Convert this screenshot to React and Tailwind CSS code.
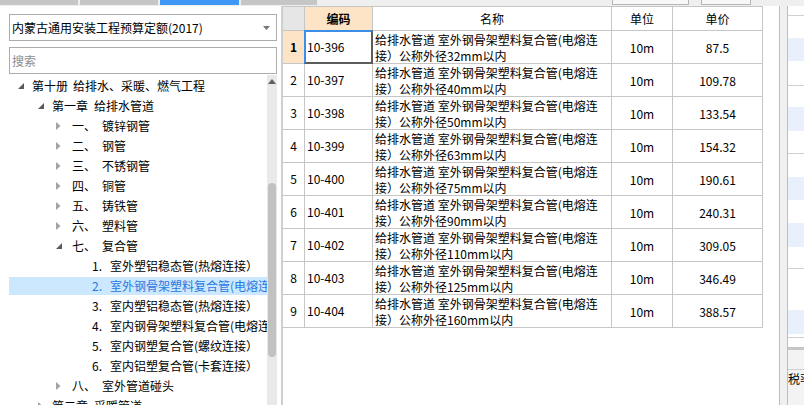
import React from "react";

const rows = [
  ["10-396", "32", "87.5"],
  ["10-397", "40", "109.78"],
  ["10-398", "50", "133.54"],
  ["10-399", "63", "154.32"],
  ["10-400", "75", "190.61"],
  ["10-401", "90", "240.31"],
  ["10-402", "110", "309.05"],
  ["10-403", "125", "346.49"],
  ["10-404", "160", "388.57"],
];

const tree = [
  { lvl: 0, icon: "open", a: "第十册", b: "给排水、采暖、燃气工程" },
  { lvl: 1, icon: "open", a: "第一章", b: "给排水管道" },
  { lvl: 2, icon: "closed", a: "一、", b: "镀锌钢管" },
  { lvl: 2, icon: "closed", a: "二、", b: "钢管" },
  { lvl: 2, icon: "closed", a: "三、", b: "不锈钢管" },
  { lvl: 2, icon: "closed", a: "四、", b: "铜管" },
  { lvl: 2, icon: "closed", a: "五、", b: "铸铁管" },
  { lvl: 2, icon: "closed", a: "六、", b: "塑料管" },
  { lvl: 2, icon: "open", a: "七、", b: "复合管" },
  { lvl: 3, a: "1.", b: "室外塑铝稳态管(热熔连接）" },
  { lvl: 3, a: "2.", b: "室外钢骨架塑料复合管(电熔连接）", sel: true },
  { lvl: 3, a: "3.", b: "室内塑铝稳态管(热熔连接）" },
  { lvl: 3, a: "4.", b: "室内钢骨架塑料复合管(电熔连接）" },
  { lvl: 3, a: "5.", b: "室内钢塑复合管(螺纹连接）" },
  { lvl: 3, a: "6.", b: "室内铝塑复合管(卡套连接）" },
  { lvl: 2, icon: "closed", a: "八、", b: "室外管道碰头" },
  { lvl: 1, icon: "closed", a: "第二章", b: "采暖管道" },
];

function Arrow({ type }) {
  if (type === "open") {
    return (
      <svg width="6" height="6" viewBox="0 0 6 6">
        <polygon points="6,0 6,6 0,6" fill="#5b5b5b" />
      </svg>
    );
  }
  return (
    <svg width="5" height="8" viewBox="0 0 5 8">
      <polygon points="0,0 4.5,4 0,8" fill="#a3a3a3" />
    </svg>
  );
}

function TreeRow({ item }) {
  // indentation per level, measured from the list's left edge
  let lead;
  if (item.lvl === 0) {
    lead = (
      <>
        <div className="w-[9px] shrink-0" />
        <div className="w-[14px] shrink-0 flex items-center"><Arrow type={item.icon} /></div>
        <span className="shrink-0">{item.a}</span>
        <span className="ml-[5px] shrink-0">{item.b}</span>
      </>
    );
  } else if (item.lvl === 1) {
    lead = (
      <>
        <div className="w-[29px] shrink-0" />
        <div className="w-[14px] shrink-0 flex items-center"><Arrow type={item.icon} /></div>
        <span className="shrink-0">{item.a}</span>
        <span className="ml-[6px] shrink-0">{item.b}</span>
      </>
    );
  } else if (item.lvl === 2) {
    lead = (
      <>
        <div className="w-[47px] shrink-0" />
        <div className="w-[16px] shrink-0 flex items-center"><Arrow type={item.icon} /></div>
        <span className="w-[30px] shrink-0">{item.a}</span>
        <span className="shrink-0">{item.b}</span>
      </>
    );
  } else {
    lead = (
      <>
        <div className="w-[83px] shrink-0" />
        <span className="w-[18px] shrink-0">{item.a}</span>
        <span className="shrink-0">{item.b}</span>
      </>
    );
  }
  return (
    <div className="h-[20px] flex items-center">
      <div
        className={
          "h-[18px] w-full flex items-center overflow-hidden whitespace-nowrap leading-[18px] " +
          (item.sel ? "bg-[#cce8ff] text-[#2a78de]" : "text-black")
        }
      >
        {lead}
      </div>
    </div>
  );
}

function LeftPanel() {
  return (
    <div className="w-[281px] flex flex-col pt-[8px] pl-[9px] pr-[4px] bg-white">
      <div className="h-[27px] border border-[#acacac] flex items-center justify-between pl-[2px] pr-[6px]">
        <span className="whitespace-nowrap">内蒙古通用安装工程预算定额(2017)</span>
        <svg width="7" height="4" viewBox="0 0 7 4">
          <polygon points="0,0 7,0 3.5,4" fill="#777" />
        </svg>
      </div>
      <div className="mt-[6px] h-[27px] border border-[#acacac] flex items-center pl-[2px] text-[#8c8c8c]">
        搜索
      </div>
      <div className="mt-[1px] flex flex-1 min-h-0">
        <div className="w-[258px] overflow-hidden pt-[1px]">
          {tree.map((t, i) => (
            <TreeRow key={i} item={t} />
          ))}
        </div>
        <div className="relative w-[10px] bg-[#e9e9e9]">
          <svg className="absolute top-[4px] left-[1px]" width="8" height="5" viewBox="0 0 8 5">
            <polygon points="0,5 8,5 4,0" fill="#606060" />
          </svg>
          <div className="absolute top-[108px] left-[1px] w-[8px] h-[174px] rounded-[4px] bg-[#c1c1c1]" />
        </div>
      </div>
    </div>
  );
}

const cell = "border-r border-b border-[#c6c6c6]";

function TablePanel() {
  return (
    <div className="w-[496px] bg-white">
      <div className="w-[480px] border-t border-[#c6c6c6]">
        <div className="grid grid-cols-[22px_68px_239px_61px_90px] h-[24px]">
          <div className={cell + " bg-[#e6e6e6]"} />
          <div className={cell + " bg-[#fde4c6] font-bold flex items-center justify-center"}>编码</div>
          <div className={cell + " flex items-center justify-center"}>名称</div>
          <div className={cell + " flex items-center justify-center"}>单位</div>
          <div className={cell + " flex items-center justify-center"}>单价</div>
        </div>
        {rows.map((r, i) => (
          <div key={i} className="grid grid-cols-[22px_68px_239px_61px_90px] h-[33px]">
            <div
              className={
                cell +
                " flex items-center justify-center " +
                (i === 0 ? "bg-[#fde4c6] font-bold" : "")
              }
            >
              {i + 1}
            </div>
            <div className={cell + " relative flex items-center pl-[2px]"}>
              {r[0]}
              {i === 0 && (
                <div className="absolute -left-[1px] -top-[1px] -right-[1px] -bottom-[1px] border-2 border-t-[#3d8ee8] border-l-[#3d8ee8] border-r-[#5c5c5c] border-b-[#5c5c5c]" />
              )}
            </div>
            <div className={cell + " pl-[2px] pt-[1px] leading-[16px] whitespace-nowrap overflow-hidden"}>
              <div>给排水管道 室外钢骨架塑料复合管(电熔连</div>
              <div>接）公称外径{r[1]}mm以内</div>
            </div>
            <div className={cell + " flex items-center justify-center pt-[2px]"}>10m</div>
            <div className={cell + " flex items-center justify-center pt-[2px]"}>{r[2]}</div>
          </div>
        ))}
      </div>
    </div>
  );
}

function RightPanel() {
  return (
    <div className="flex w-[25px]">
      <div className="w-[9px] bg-[#f0f0f0] border-l border-r border-[#bdbdbd]" />
      <div className="w-[16px] flex flex-col bg-white">
        <div className="h-[10px] border-b border-[#d0d0d0]" />
        <div className="h-[22px]" />
        <div className="h-[23px] bg-[#e8f0fc]" />
        <div className="h-[25px] border-b border-[#d0d0d0]" />
        <div className="h-[21px]" />
        <div className="h-[24px] bg-[#e8f0fc]" />
        <div className="h-[23px] border-b border-[#d0d0d0]" />
        <div className="h-[23px]" />
        <div className="h-[23px] bg-[#e8f0fc]" />
        <div className="h-[23px]" />
        <div className="h-[24px] bg-[#e8f0fc]" />
        <div className="h-[22px] border-b border-[#d0d0d0]" />
        <div className="h-[41px]" />
        <div className="h-[24px] bg-[#e8f0fc]" />
        <div className="h-[4px] border-b border-[#d0d0d0]" />
        <div className="h-[9px]" />
        <div className="h-[3px] bg-[#c6c6c6]" />
        <div className="h-[20px] bg-[#f3f3f3] border-b border-[#d0d0d0]" />
        <div className="flex-1 bg-[#f3f3f3] whitespace-nowrap overflow-hidden leading-[18px]">税率</div>
      </div>
    </div>
  );
}

export default function App() {
  return (
    <div className="w-[804px] h-[405px] overflow-hidden bg-white flex flex-col font-['Noto_Sans_CJK_SC','Noto_Sans',sans-serif] text-[12px] text-black">
      <div className="h-[6px] bg-[#efefef] flex items-start">
        <div className="w-[78px] h-[5px] bg-[#c6c6c6]" />
        <div className="ml-[2px] w-[78px] h-[5px] bg-[#c6c6c6]" />
        <div className="ml-[2px] w-[79px] h-[5px] bg-[#3f97f6]" />
        <div className="ml-[2px] w-[76px] h-[5px] bg-[#c6c6c6]" />
        <div className="ml-[295px] w-[77px] h-[5px] bg-[#f8f8f8] border border-t-0 border-[#b5b5b5]" />
        <div className="ml-[12px] w-[50px] h-[5px] bg-[#f8f8f8] border border-t-0 border-[#b5b5b5]" />
      </div>
      <div className="flex flex-1 min-h-0">
        <LeftPanel />
        <div className="w-[2px] bg-[#cfcfcf]" />
        <TablePanel />
        <RightPanel />
      </div>
    </div>
  );
}
